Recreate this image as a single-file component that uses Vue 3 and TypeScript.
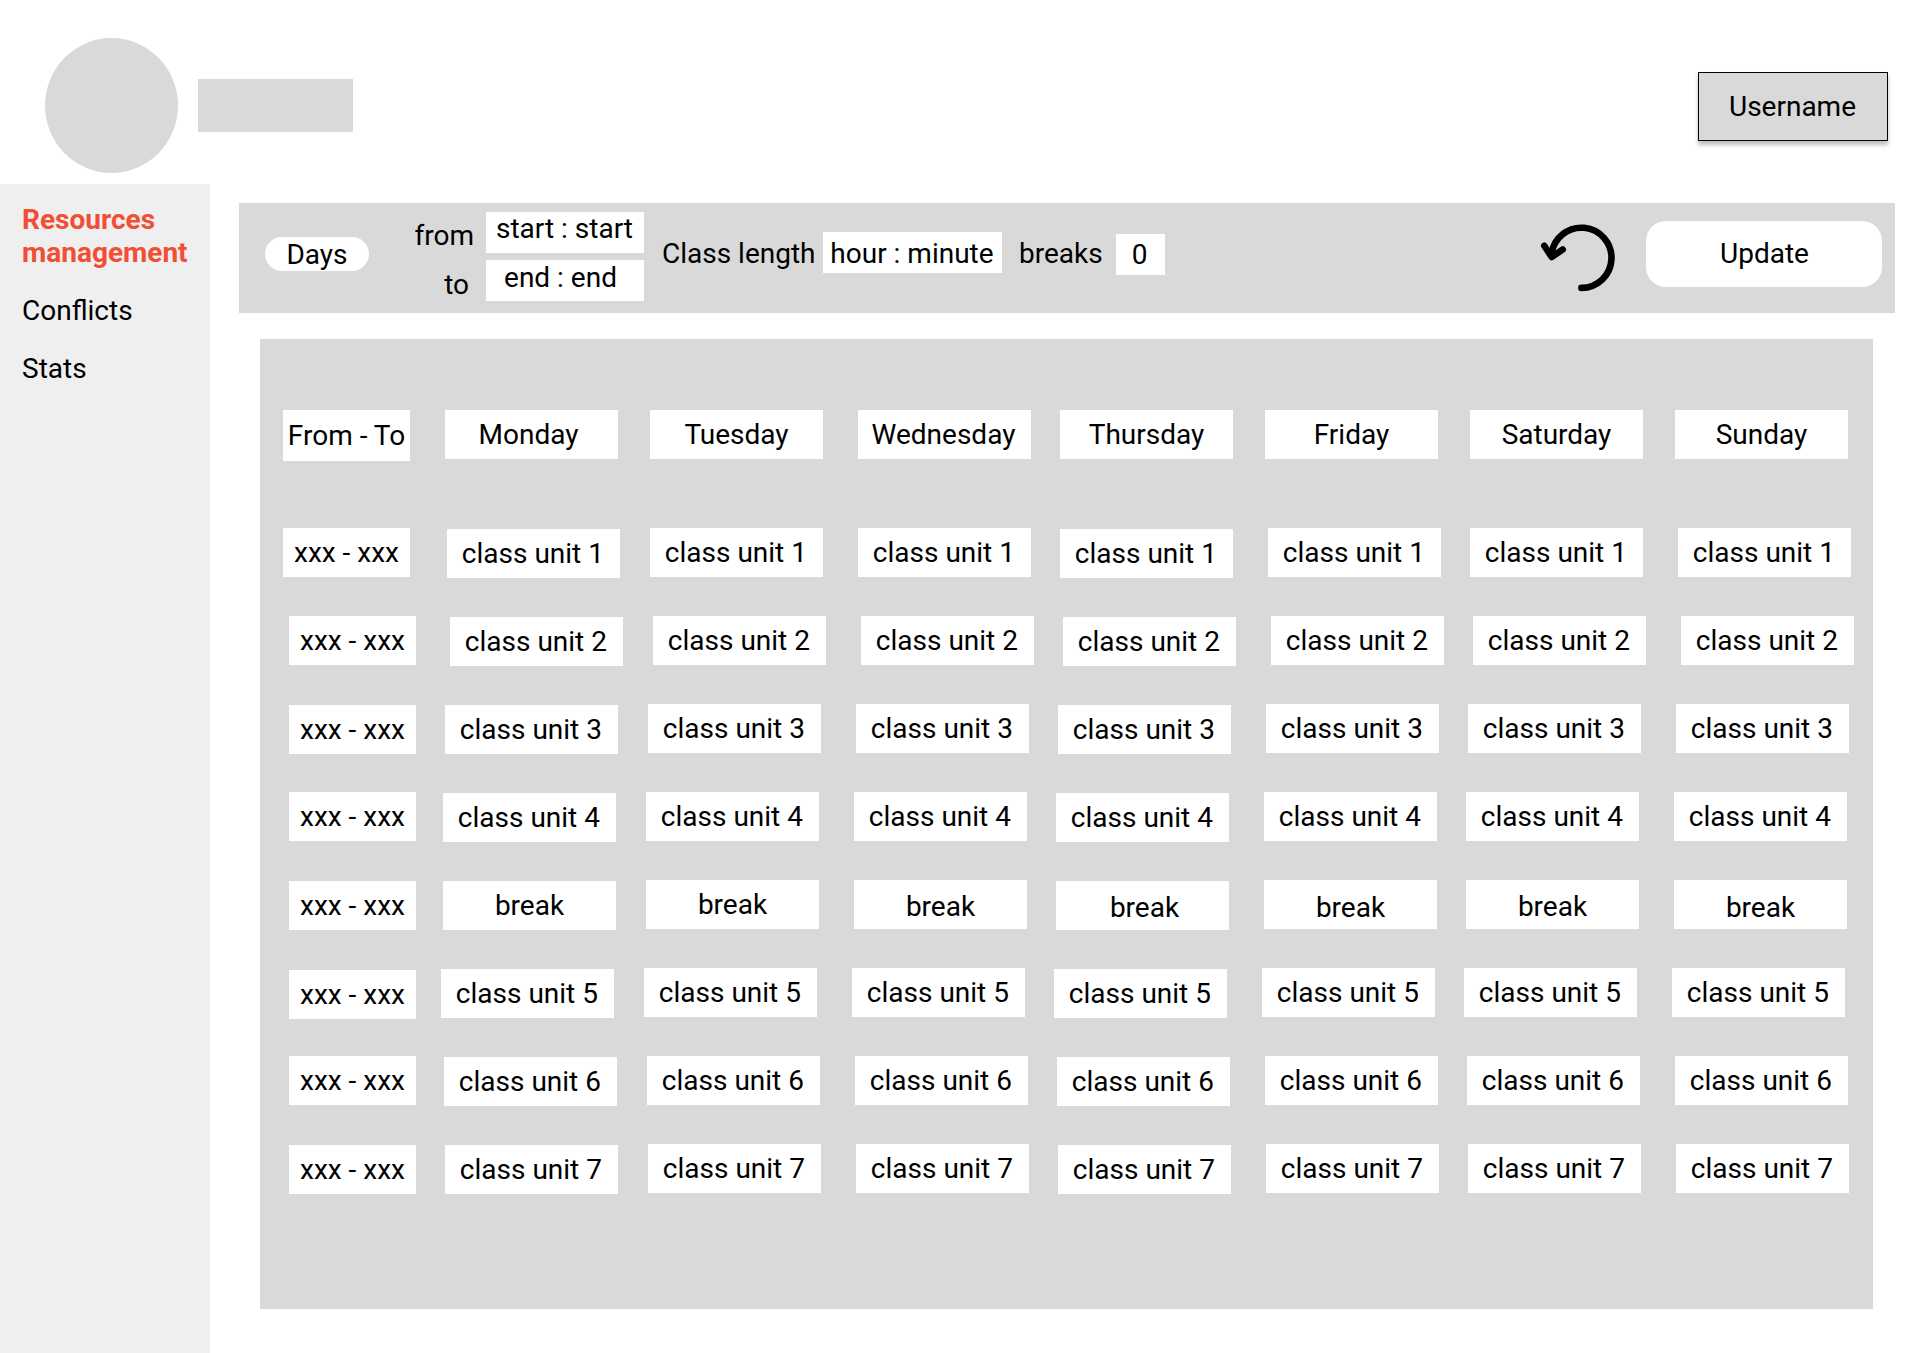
<script setup lang="ts">
interface Cell {
  label: string
  dx?: number
  dy?: number
}

interface Row {
  time: string
  timeDrop: number
  shift: number
  cells: Cell[]
}

const menu: string[] = ['Conflicts', 'Stats']

const days: Cell[] = [
  { label: 'Monday', dx: -3 },
  { label: 'Tuesday' },
  { label: 'Wednesday', dx: -1 },
  { label: 'Thursday' },
  { label: 'Friday' },
  { label: 'Saturday' },
  { label: 'Sunday' },
]

const unit = (n: number): Cell[] => days.map(() => ({ label: `class unit ${n}`, dx: -0.6 }))

const breaks: Cell[] = [
  { label: 'break' },
  { label: 'break' },
  { label: 'break', dy: 2 },
  { label: 'break', dx: 2, dy: 2 },
  { label: 'break', dy: 3 },
  { label: 'break', dy: 2 },
  { label: 'break', dy: 3 },
]

const time = 'xxx - xxx'
const rows: Row[] = [
  { time, timeDrop: 0, shift: 37, cells: unit(1) },
  { time, timeDrop: 0, shift: 34, cells: unit(2) },
  { time, timeDrop: 1, shift: 29, cells: unit(3) },
  { time, timeDrop: 0, shift: 27, cells: unit(4) },
  { time, timeDrop: 1, shift: 27, cells: breaks },
  { time, timeDrop: 2, shift: 25, cells: unit(5) },
  { time, timeDrop: 0, shift: 28, cells: unit(6) },
  { time, timeDrop: 1, shift: 29, cells: unit(7) },
]

const nudge = (c: Cell) => ({ transform: `translate(${c.dx ?? 0}px, ${c.dy ?? 0}px)` })
</script>

<template>
  <div class="page">
    <header class="top">
      <div class="logo"></div>
      <div class="brand"></div>
      <button class="user">Username</button>
    </header>

    <div class="body">
      <nav class="side">
        <a class="active">Resources<br />management</a>
        <a v-for="m in menu" :key="m">{{ m }}</a>
      </nav>

      <main class="main">
        <section class="toolbar">
          <button class="days-btn">Days</button>
          <div class="range-labels">
            <span>from</span>
            <span class="to">to</span>
          </div>
          <div class="range">
            <div class="field start">start : start</div>
            <div class="field end">end : end</div>
          </div>
          <span class="length-label">Class length</span>
          <div class="field length">hour : minute</div>
          <span class="breaks-label">breaks</span>
          <div class="field count">0</div>
          <svg class="undo" width="80" height="76" viewBox="0 0 80 76" fill="none" stroke="#000" stroke-width="6.6" stroke-linecap="round" stroke-linejoin="round">
            <path d="M41.4 67.9A30.1 30.1 0 1 0 11.6 33.5" />
            <path d="M4.3 25.7L11.7 37L22.7 29.5" />
          </svg>
          <button class="update">Update</button>
        </section>

        <section class="board">
          <div class="row head">
            <div class="cell time">From - To</div>
            <div class="units">
              <div v-for="d in days" :key="d.label" class="cell">
                <span :style="nudge(d)">{{ d.label }}</span>
              </div>
            </div>
          </div>
          <div v-for="(r, i) in rows" :key="i" class="row" :class="{ first: i === 0 }">
            <div class="cell time" :style="{ marginTop: r.timeDrop + 'px' }">{{ r.time }}</div>
            <div class="units" :style="{ marginLeft: r.shift + 'px' }">
              <div v-for="(c, j) in r.cells" :key="j" class="cell">
                <span :style="nudge(c)">{{ c.label }}</span>
              </div>
            </div>
          </div>
        </section>
      </main>
    </div>
  </div>
</template>

<style>
body {
  margin: 0;
  background: #fff;
}
</style>

<style scoped>
.page {
  width: 1920px;
  height: 1353px;
  display: flex;
  flex-direction: column;
  overflow: hidden;
  background: #fff;
  color: #000;
  font-family: Roboto, sans-serif;
  font-size: 28px;
  line-height: 33px;
}

.page * {
  box-sizing: border-box;
}

button {
  margin: 0;
  padding: 0;
  border: 0;
  font: inherit;
  color: inherit;
}

.top {
  height: 184px;
  display: flex;
  align-items: flex-start;
  padding-left: 45px;
}

.logo {
  width: 133px;
  height: 135px;
  margin-top: 38px;
  border-radius: 50%;
  background: #d9d9d9;
}

.brand {
  width: 155px;
  height: 53px;
  margin: 79px 0 0 20px;
  background: #d9d9d9;
}

.user {
  width: 190px;
  height: 69px;
  margin: 72px 32px 0 auto;
  padding-right: 1px;
  border: 1px solid #000;
  background: #d9d9d9;
  box-shadow: 0 4px 4px rgba(0, 0, 0, 0.25);
}

.body {
  flex: 1;
  display: flex;
}

.side {
  width: 210px;
  padding: 19px 0 0 22px;
  display: flex;
  flex-direction: column;
  gap: 25px;
  background: #efefef;
}

.active {
  font-weight: 700;
  color: #f24e36;
}

.main {
  flex: 1;
  padding: 19px 25px 0 29px;
}

.toolbar {
  height: 110px;
  display: flex;
  align-items: flex-start;
  padding-left: 26px;
  background: #d9d9d9;
  white-space: nowrap;
}

.days-btn {
  width: 104px;
  height: 34px;
  margin-top: 34px;
  border-radius: 17px;
  background: #fff;
}

.range-labels {
  width: 105px;
  margin-top: 16px;
  display: flex;
  flex-direction: column;
  gap: 16px;
  align-items: flex-end;
}

.to {
  margin-right: 5px;
}

.range {
  margin: 9px 0 0 12px;
  display: flex;
  flex-direction: column;
  gap: 7px;
}

.field {
  width: 158px;
  height: 41px;
  text-align: center;
  background: #fff;
}

.start {
  padding-right: 1px;
}

.end {
  padding: 1px 9px 0 0;
}

.length-label {
  width: 161px;
  margin: 34px 0 0 18px;
}

.length {
  width: 179px;
  margin-top: 29px;
  padding: 5px 1px 0 0;
}

.breaks-label {
  width: 97px;
  margin: 34px 0 0 17px;
}

.count {
  width: 49px;
  margin-top: 31px;
  padding: 4px 2px 0 0;
}

.undo {
  margin: 17px 0 0 375px;
}

.update {
  width: 236px;
  height: 66px;
  margin: 18px 13px 0 auto;
  padding: 0 0 2px 1px;
  border-radius: 20px;
  background: #fff;
}

.board {
  width: 1613px;
  height: 970px;
  margin: 26px 0 0 21px;
  padding: 71px 0 0 29px;
  background: #d9d9d9;
}

.row {
  height: 88px;
  display: flex;
  align-items: flex-start;
}

.row.head {
  height: 118px;
  margin-left: -6px;
}

.row.first {
  margin-left: -6px;
}

.cell {
  width: 173px;
  height: 49px;
  display: flex;
  align-items: center;
  justify-content: center;
  white-space: nowrap;
  background: #fff;
}

.time {
  width: 127px;
}

.head .time {
  height: 51px;
}

.units {
  display: grid;
  grid-template-columns: 203px 208px 202px 208px 202px 208px 173px;
}

.head .units {
  margin-left: 35px;
  grid-template-columns: 205px 208px 202px 205px 205px 205px 173px;
}

.row:not(.head) .cell:nth-child(3n + 1):not(:last-child):not(.time) {
  margin-top: 1px;
}
</style>
